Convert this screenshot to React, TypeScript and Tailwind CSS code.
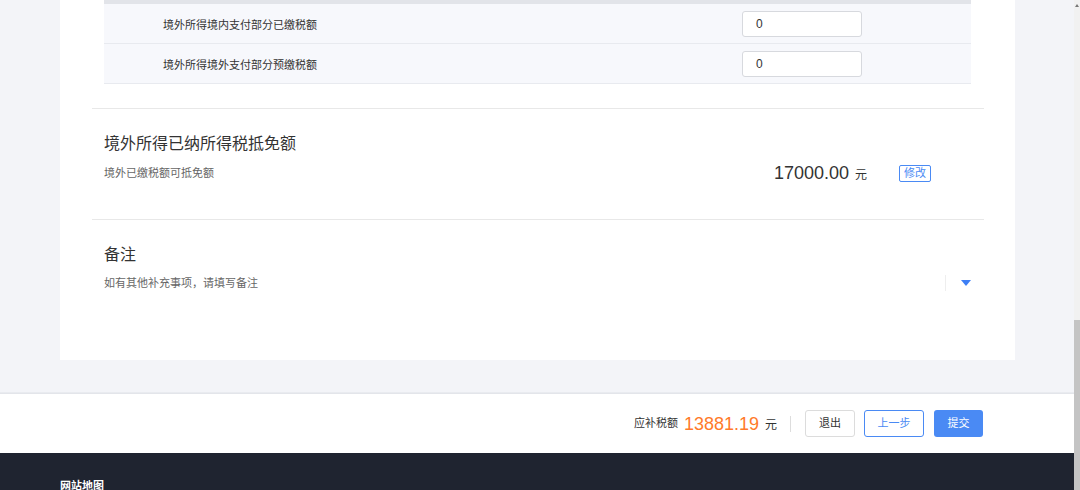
import React from "react";

const font = { fontFamily: '"Liberation Sans", "Noto Sans CJK SC", sans-serif' };

function Row({ label }: { label: string }) {
  return (
    <div className="flex h-[40px] items-center border-b border-[#e8eaef] bg-[#f7f8fc]">
      <div className="w-[638px] pl-[59px] pt-[3px] text-[11px] leading-[16px] text-[#333]">{label}</div>
      <div className="flex h-[26px] w-[120px] items-center rounded-[3px] border border-[#d7d9de] bg-white pl-[13px] text-[12px] text-[#333]">
        0
      </div>
    </div>
  );
}

export default function App() {
  return (
    <div className="flex h-[490px] w-[1080px] overflow-hidden" style={font}>
      <div className="flex h-[490px] w-[1074px] flex-col bg-[#f3f4f8]">
        {/* card */}
        <div className="shrink-0 pl-[60px] pr-[59px]">
          <div className="flex h-[360px] flex-col bg-white pl-[32px] pr-[31px]">
            {/* table */}
            <div className="mx-[12px] w-[867px]">
              <div className="h-[4px] bg-[#e2e4e9]" />
              <Row label="境外所得境内支付部分已缴税额" />
              <Row label="境外所得境外支付部分预缴税额" />
            </div>
            <div className="mt-[24px] h-px shrink-0 bg-[#e8e8e8]" />
            {/* section 1 */}
            <div className="pl-[12px] pt-[24px] pb-[36px]">
              <div className="text-[16px] leading-[22px] text-[#333]">境外所得已纳所得税抵免额</div>
              <div className="mt-[8px] flex h-[20px] items-center">
                <div className="flex-1 text-[11px] leading-[16px] text-[#666]">境外已缴税额可抵免额</div>
                <div className="mr-[53px] flex items-center">
                  <span className="text-[18px] leading-[20px] text-[#333]">17000.00</span>
                  <span className="ml-[6px] mt-[3px] text-[12px] leading-[16px] text-[#333]">元</span>
                  <span className="ml-[32px] flex h-[17px] w-[32px] items-center justify-center rounded-[2px] border border-[#4a8af4] text-[11px] leading-none text-[#4a8af4]">
                    修改
                  </span>
                </div>
              </div>
            </div>
            <div className="h-px shrink-0 bg-[#e8e8e8]" />
            {/* section 2 */}
            <div className="pl-[12px] pt-[24px]">
              <div className="text-[16px] leading-[22px] text-[#333]">备注</div>
              <div className="mt-[8px] flex h-[18px] items-center">
                <div className="flex-1 text-[11px] leading-[16px] text-[#666]">如有其他补充事项，请填写备注</div>
                <div className="h-[16px] w-px bg-[#eeeeee]" />
                <svg className="ml-[15px] mr-[13px]" width="10" height="6" viewBox="0 0 10 6">
                  <path d="M0 0 L10 0 L5 6 Z" fill="#3d7ff5" />
                </svg>
              </div>
            </div>
          </div>
        </div>
        <div className="h-[32px] shrink-0" />
        {/* bottom bar */}
        <div className="h-[2px] shrink-0 bg-gradient-to-b from-[#eceef2] to-[#e0e2e7]" />
        <div className="flex h-[59px] shrink-0 items-center justify-end bg-white pr-[91px]">
          <span className="text-[11px] text-[#333]">应补税额</span>
          <span className="ml-[6px] text-[18px] leading-[22px] text-[#ff7a2a]">13881.19</span>
          <span className="ml-[6px] mt-[3px] text-[12px] text-[#333]">元</span>
          <div className="ml-[13px] h-[16px] w-px bg-[#dddddd]" />
          <div className="ml-[14px] flex h-[27px] w-[50px] items-center justify-center rounded-[3px] border border-[#dcdcdc] text-[11px] text-[#333]">
            退出
          </div>
          <div className="ml-[9px] flex h-[27px] w-[60px] items-center justify-center rounded-[3px] border border-[#4a8af4] text-[11px] text-[#4a8af4]">
            上一步
          </div>
          <div className="ml-[10px] flex h-[27px] w-[49px] items-center justify-center rounded-[3px] bg-[#4a8af4] text-[11px] text-white">
            提交
          </div>
        </div>
        {/* footer */}
        <div className="min-h-0 flex-1 overflow-hidden bg-[#1f2430] pl-[60px] pt-[25px]">
          <div className="text-[11px] font-bold leading-[16px] text-white">网站地图</div>
        </div>
      </div>
      {/* scrollbar */}
      <div className="flex w-[6px] flex-col bg-[#f1f1f1]">
        <div className="flex h-[320px] shrink-0 justify-center pt-[4px]">
          <svg width="4" height="3" viewBox="0 0 4 3">
            <path d="M0 3 L2 0 L4 3 Z" fill="#777" />
          </svg>
        </div>
        <div className="flex-1 bg-[#c4c4c4]" />
      </div>
    </div>
  );
}
